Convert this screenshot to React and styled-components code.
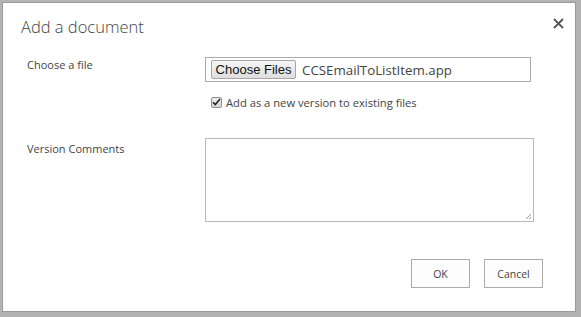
import React from "react";
import styled, { createGlobalStyle } from "styled-components";

const Global = createGlobalStyle`
  html, body { margin: 0; padding: 0; }
  body {
    background: #b3b3b3;
    width: 581px;
    height: 317px;
    overflow: hidden;
    font-family: "Open Sans", "Segoe UI", sans-serif;
  }
`;

const Backdrop = styled.div`
  width: 581px;
  height: 317px;
  box-sizing: border-box;
  padding: 2px 4px 4px 2px;
`;

const Dialog = styled.div`
  box-sizing: border-box;
  width: 574px;
  height: 310px;
  background: #fff;
  border: 1px solid #9a9a9a;
  display: flex;
  flex-direction: column;
  padding: 12px 0 0 0;
`;

const Header = styled.div`
  display: flex;
  justify-content: space-between;
  align-items: flex-start;
  padding: 0 10px 0 18px;
  height: 42px;
`;

const Title = styled.h1`
  margin: 0;
  font-family: "Open Sans", sans-serif;
  font-weight: 300;
  font-size: 16.5px;
  line-height: 24px;
  color: #444;
`;

const Close = styled.button`
  border: 0;
  background: none;
  padding: 0;
  margin-top: 3px;
  width: 12px;
  height: 12px;
  display: flex;
  cursor: pointer;
`;

const Form = styled.div`
  display: grid;
  grid-template-columns: 178px 330px;
  padding-left: 24px;
`;

const Label = styled.div`
  font-size: 11px;
  color: #444;
  line-height: 16px;
  padding-top: ${(p) => p.$top || 0}px;
`;

const Field = styled.div`
  display: flex;
  flex-direction: column;
`;

const FileBox = styled.div`
  box-sizing: border-box;
  width: 326px;
  height: 25px;
  border: 1px solid #ababab;
  display: flex;
  align-items: center;
  padding-left: 5px;
  gap: 6px;
`;

const FileButton = styled.button`
  box-sizing: border-box;
  height: 19px;
  width: 85px;
  padding: 0;
  border: 1px solid #a7a7a7;
  border-radius: 2px;
  background: linear-gradient(#f6f6f6, #dedede);
  font-family: "Liberation Sans", Arial, sans-serif;
  font-size: 13px;
  color: #111;
  line-height: 17px;
`;

const FileName = styled.span`
  font-size: 13.3px;
  color: #444;
`;

const CheckRow = styled.label`
  display: flex;
  align-items: center;
  gap: 4px;
  margin: 12px 0 0 6px;
  font-size: 11.2px;
  color: #444;
  height: 16px;
`;

const Box = styled.span`
  box-sizing: border-box;
  width: 11px;
  height: 11px;
  border: 1px solid #8f8f8f;
  border-radius: 2px;
  background: linear-gradient(#f0f0f0, #d6d6d6);
  display: flex;
  align-items: center;
  justify-content: center;
`;

const Comments = styled.div`
  box-sizing: border-box;
  width: 329px;
  height: 84px;
  border: 1px solid #b9b9b9;
  position: relative;
  margin-top: 28px;
`;

const Grip = styled.svg`
  position: absolute;
  right: 1px;
  bottom: 1px;
`;

const Footer = styled.div`
  display: flex;
  justify-content: flex-end;
  gap: 14px;
  padding: 37px 32px 0 0;
`;

const Btn = styled.button`
  box-sizing: border-box;
  width: 59px;
  height: 29px;
  background: #fdfdfd;
  border: 1px solid #ababab;
  font-family: "Open Sans", sans-serif;
  font-size: 10.5px;
  color: #444;
  padding: 0;
`;

export default function App() {
  return (
    <>
      <Global />
      <Backdrop>
        <Dialog>
          <Header>
            <Title>Add a document</Title>
            <Close aria-label="Close">
              <svg width="11" height="11" viewBox="0 0 11 11">
                <path d="M1 1 L10 10 M10 1 L1 10" stroke="#555" strokeWidth="1.8" />
              </svg>
            </Close>
          </Header>
          <Form>
            <Label $top={0}>Choose a file</Label>
            <Field>
              <FileBox>
                <FileButton>Choose Files</FileButton>
                <FileName>CCSEmailToListItem.app</FileName>
              </FileBox>
              <CheckRow>
                <Box>
                  <svg width="9" height="8" viewBox="0 0 9 8">
                    <path d="M1 4.2 L3.3 6.5 L8 1" stroke="#222" strokeWidth="1.6" fill="none" />
                  </svg>
                </Box>
                Add as a new version to existing files
              </CheckRow>
            </Field>
            <Label $top={31}>Version Comments</Label>
            <Field>
              <Comments>
                <Grip width="7" height="7" viewBox="0 0 7 7">
                  <path d="M6 1 L1 6 M6 4 L4 6" stroke="#999" strokeWidth="1" />
                </Grip>
              </Comments>
            </Field>
          </Form>
          <Footer>
            <Btn>OK</Btn>
            <Btn>Cancel</Btn>
          </Footer>
        </Dialog>
      </Backdrop>
    </>
  );
}
